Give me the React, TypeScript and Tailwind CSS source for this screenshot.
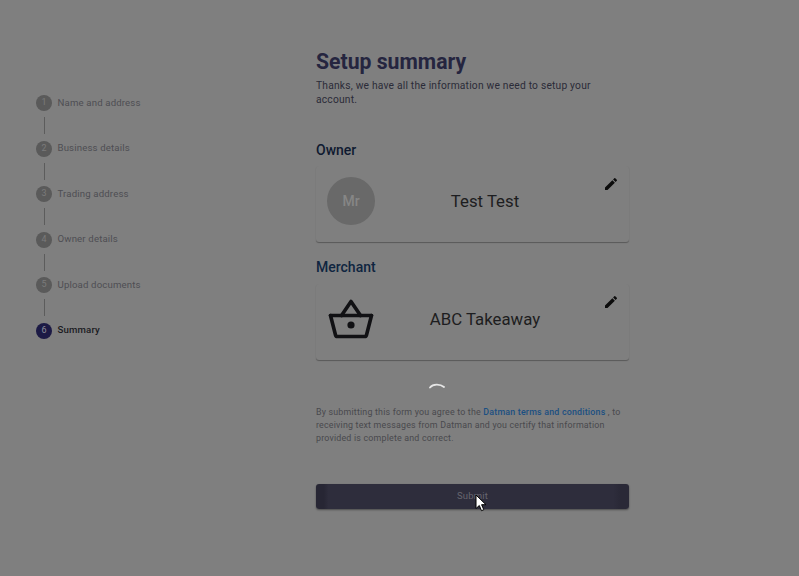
import React from "react";

const steps = ["Name and address", "Business details", "Trading address", "Owner details", "Upload documents", "Summary"];

function Pencil() {
  return (
    <svg viewBox="0 0 24 24" className="w-[16px] h-[16px]" fill="#0c0c0c">
      <path d="M3 17.25V21h3.75L17.81 9.94l-3.75-3.75L3 17.25zM20.71 7.04a.996.996 0 0 0 0-1.41l-2.34-2.34a.996.996 0 0 0-1.41 0l-1.83 1.83 3.75 3.75 1.83-1.83z" />
    </svg>
  );
}

function Basket() {
  return (
    <svg viewBox="0 0 46 40" className="w-[46px] h-[40px]" fill="none" stroke="#111114" strokeWidth="3.6" strokeLinejoin="round" strokeLinecap="round">
      <path d="M2.5 16.5h41" />
      <path d="M2.5 16.5l5 19.5a2 2 0 0 0 2 1.5h27a2 2 0 0 0 2-1.5l5-19.5" />
      <path d="M13.5 16.5L23 2.5l9.5 14" />
      <circle cx="23" cy="26" r="3.6" fill="#111114" stroke="none" />
    </svg>
  );
}

function Card({ icon, name }: { icon: React.ReactNode; name: string }) {
  return (
    <div className="relative flex h-[76px] w-full items-start rounded-[3px] bg-[#7f7f7f] pl-[11px] pt-[11px] shadow-[0_1px_1px_rgba(0,0,0,0.3)]">
      <div className="flex h-[48px] w-[48px] shrink-0 items-center justify-center">{icon}</div>
      <div className="flex-1 pr-[34px] text-center text-[16.8px] leading-[48px] text-[#1d1d20]">{name}</div>
      <div className="absolute right-[10px] top-[10px]">
        <Pencil />
      </div>
    </div>
  );
}

export default function App() {
  return (
    <div className="relative flex h-[576px] w-[799px] overflow-hidden bg-[#7f7f7f] font-['Roboto',sans-serif]">
      <div className="w-[316px] shrink-0 pl-[36px] pt-[95px]">
        {steps.map((s, i) => (
          <div key={s}>
            <div className="flex h-[16px] items-center gap-[5.5px]">
              <div className={`flex h-[16px] w-[16px] shrink-0 items-center justify-center rounded-full text-[9px] ${i === 5 ? "bg-[#1c1a45] text-[#8d8d99]" : "bg-[#5a5a5a] text-[#7b7b7b]"}`}>
                {i + 1}
              </div>
              <span className={`text-[9.65px] tracking-[0.15px] ${i === 5 ? "font-medium text-[#1b1b22]" : "text-[#4e4e53]"}`}>{s}</span>
            </div>
            {i < 5 && (
              <div className="ml-[7.5px] flex h-[29.5px] items-center">
                <div className="h-[17px] w-px bg-[#5c5c5c]" />
              </div>
            )}
          </div>
        ))}
      </div>

      <div className="w-[313px] shrink-0 pt-[48px]">
        <h1 className="text-[21.2px] font-bold leading-[28px] text-[#25253f]">Setup summary</h1>
        <p className="mt-[3px] text-[10.25px] leading-[14px] tracking-[0.2px] text-[#2b2b38]">
          Thanks, we have all the information we need to setup your account.
        </p>
        <h2 className="mt-[33px] text-[14px] font-medium leading-[20px] text-[#0f1a30]">Owner</h2>
        <div className="mt-[6px]">
          <Card
            name="Test Test"
            icon={
              <div className="flex h-[48px] w-[48px] items-center justify-center rounded-full bg-[#696969] text-[14px] font-medium text-[#868686]">
                Mr
              </div>
            }
          />
        </div>
        <h2 className="mt-[15px] text-[14px] font-medium leading-[20px] text-[#0f2540]">Merchant</h2>
        <div className="mt-[7px]">
          <Card name="ABC Takeaway" icon={<Basket />} />
        </div>
        <p className="mt-[46px] text-[8.85px] leading-[13px] tracking-[0.2px] text-[#49494d]">
          By submitting this form you agree to the <span className="font-medium text-[#1b4f82]">Datman terms and conditions</span> , to receiving text messages from Datman and you certify that information provided is complete and correct.
        </p>
        <button className="mt-[39px] flex h-[25px] w-full items-center justify-center rounded-[3px] bg-[linear-gradient(90deg,#272634_0,#272634_2.5%,#2e2d3c_4%,#2e2d3c_95%,#2a2937_97%)] text-[9.5px] tracking-[0.2px] text-[#66656f] shadow-[0_1px_2px_rgba(0,0,0,0.4)]">
          Submit
        </button>
      </div>

      <svg viewBox="0 0 16 8" className="absolute left-[429px] top-[382px] h-[8px] w-[16px]" fill="none" stroke="#e6e6e6" strokeWidth="1.8" strokeLinecap="round">
        <path d="M1 5.5C4 1.8 11 1.8 15 5" />
      </svg>

      <svg viewBox="0 0 12 18" className="absolute left-[475px] top-[494px] h-[18px] w-[12px]">
        <path d="M1 1v13.5l3.3-3 2.2 5.2 2.3-1-2.2-5h4.4L1 1z" fill="#fff" stroke="#000" strokeWidth="1" strokeLinejoin="round" />
      </svg>
    </div>
  );
}
